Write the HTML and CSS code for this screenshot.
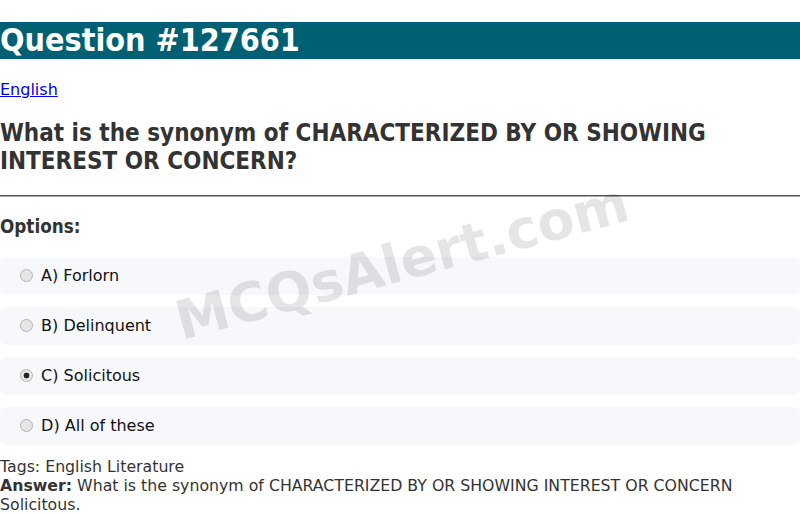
FILE: index.html
```html
<!DOCTYPE html>
<html>
<head>
<meta charset="utf-8">
<link rel="stylesheet" href="styles.css">
</head>
<body>
<h1 class="title">Question #127661</h1>
<p class="cat"><a href="#">English</a></p>
<h2 class="question">What is the synonym of CHARACTERIZED BY OR SHOWING INTEREST OR CONCERN?</h2>
<hr class="rule">
<h3 class="opts-head">Options:</h3>
<div class="options">
  <label class="option"><input class="radio" type="radio" name="q"> A) Forlorn</label>
  <label class="option"><input class="radio" type="radio" name="q"> B) Delinquent</label>
  <label class="option"><input class="radio" type="radio" name="q" checked> C) Solicitous</label>
  <label class="option"><input class="radio" type="radio" name="q"> D) All of these</label>
</div>
<div class="meta">
  <div>Tags: English Literature</div>
  <div><b>Answer:</b> What is the synonym of CHARACTERIZED BY OR SHOWING INTEREST OR CONCERN</div>
  <div>Solicitous.</div>
</div>
<div class="watermark">MCQsAlert.com</div>
</body>
</html>
```
FILE: styles.css
```css
html, body {
  margin: 0;
  padding: 0;
  background: #fff;
  font-family: "DejaVu Sans", sans-serif;
  color: #333;
  overflow: hidden;
}
.title, .question, .opts-head {
  font-family: "DejaVu Sans Condensed", "DejaVu Sans", sans-serif;
  font-stretch: condensed;
  font-weight: bold;
}
.title {
  font-size: 32px;
  margin: 22px 0 21.4px;
  background: #006073;
  color: #fff;
  line-height: 37px;
}
.cat {
  margin: 16px 0;
  font-size: 16px;
}
.cat a {
  color: #0000ee;
}
.question {
  font-size: 24px;
  margin: 20px 0;
  color: #333;
}
.rule {
  margin: 8px 0;
  border: 0;
  border-top: 1px solid #555;
  border-bottom: 1px solid #aaa;
}
.opts-head {
  font-size: 18.72px;
  margin: 18.7px 0 19.6px;
}
.options {
  display: flex;
  flex-direction: column;
  gap: 12px;
}
.option {
  display: flex;
  align-items: center;
  box-sizing: border-box;
  height: 38px;
  background: #f7f8fc;
  border-radius: 6px;
  padding: 0 15px;
  font-size: 16px;
  color: #111;
  white-space: pre;
}
.radio {
  appearance: none;
  -webkit-appearance: none;
  width: 13px;
  height: 13px;
  margin: 0 3px 0 5px;
  border-radius: 50%;
  border: 1px solid #b4b4b4;
  background: #e6e6e6;
  box-sizing: border-box;
}
.radio:checked {
  background: radial-gradient(circle, #222 0, #222 2.6px, #e6e6e6 3.2px);
}
.meta {
  margin-top: 12px;
  font-size: 15.75px;
  line-height: 19px;
  color: #333;
}
.watermark {
  position: absolute;
  left: 402px;
  top: 262px;
  font-size: 54px;
  font-weight: bold;
  color: rgba(0, 0, 0, 0.1);
  transform: translate(-50%, -50%) rotate(-15deg);
  pointer-events: none;
  white-space: nowrap;
}
```
